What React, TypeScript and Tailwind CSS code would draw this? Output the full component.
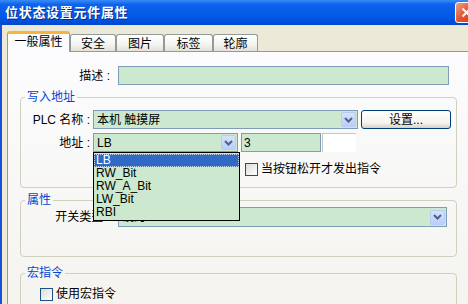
import React from 'react';

const green = 'bg-[#CCE8CF]';

function Arrow() {
  return (
    <div className="flex h-[15px] w-[15px] items-center justify-center rounded-[2px] border border-[#B9CBF3] bg-[linear-gradient(180deg,#D7E2FB_0%,#BBCEF9_100%)]">
      <svg width="9" height="6" viewBox="0 0 9 6">
        <polyline points="1,1 4.5,4.5 8,1" fill="none" stroke="#4D6185" strokeWidth="2" />
      </svg>
    </div>
  );
}

function Combo({ value, className, children }: { value: string; className: string; children?: React.ReactNode }) {
  return (
    <div className={`relative flex items-center border border-[#7F9DB9] ${green} ${className}`}>
      <span className="flex-1 pl-[3px] leading-[14px]">{value}</span>
      <div className="mr-[1px]">
        <Arrow />
      </div>
      {children}
    </div>
  );
}

function Checkbox({ label }: { label: string }) {
  return (
    <div className="flex h-[14px] items-center gap-[3px]">
      <div className="h-[13px] w-[13px] border border-[#1C5180] bg-[linear-gradient(135deg,#DCDCD7_0%,#FFFFFF_100%)]" />
      <span className="leading-[14px]">{label}</span>
    </div>
  );
}

function Group({ title, className, children }: { title: string; className: string; children: React.ReactNode }) {
  return (
    <fieldset className={`ml-[12px] w-[437px] rounded-[4px] border border-[#D0D0BF] ${className}`}>
      <legend className="ml-[4px] px-[2px] leading-[14px] text-[#0046D5]">{title}</legend>
      {children}
    </fieldset>
  );
}

const tabs = [
  { label: '安全', w: 'w-[46px]' },
  { label: '图片', w: 'w-[48px]' },
  { label: '标签', w: 'w-[49px]' },
  { label: '轮廓', w: 'w-[45px]' },
];

export default function App() {
  const items = ['LB', 'RW_Bit', 'RW_A_Bit', 'LW_Bit', 'RBI'];

  return (
    <div className="flex h-[304px] w-[468px] flex-col overflow-hidden bg-[#ECE9D8] font-['Liberation_Sans','Noto_Sans_CJK_SC',sans-serif] text-[12px] text-black">
      {/* title bar */}
      <div className="flex h-[25px] shrink-0 items-center bg-[linear-gradient(180deg,#3B8CF6_0%,#0D63EC_18%,#0058E6_70%,#0046CF_100%)] pl-[5px]">
        <span className="text-[13px] font-bold tracking-[0.7px] text-white [text-shadow:1px_1px_0_#0A2A8C]">
          位状态设置元件属性
        </span>
        <div className="ml-auto mr-[-10px] flex h-[21px] w-[23px] items-center justify-center rounded-[3px] border border-white bg-[linear-gradient(135deg,#F0A088_0%,#E0532E_50%,#C8401E_100%)]">
          <svg width="11" height="11" viewBox="0 0 11 11">
            <path d="M1.5 1.5 L9.5 9.5 M9.5 1.5 L1.5 9.5" stroke="white" strokeWidth="2" />
          </svg>
        </div>
      </div>

      {/* body */}
      <div className="flex flex-1 flex-col border-l-2 border-[#1652D8] pl-[5px] pt-[6px]">
        {/* tabs */}
        <div className="flex h-[20px] items-end">
          <div className="relative z-10 -mb-px flex h-[21px] w-[63px] items-start justify-center rounded-t-[3px] border-x border-t-[3px] border-x-[#919B9C] border-t-[#F5B43C] bg-[#FCFCFE] pt-[1px] leading-[14px]">
            一般属性
          </div>
          {tabs.map((t) => (
            <div
              key={t.label}
              className={`flex h-[17px] ${t.w} items-center justify-center rounded-t-[3px] border border-b-0 border-[#919B9C] bg-[linear-gradient(180deg,#FFFFFF_0%,#F3F3EF_60%,#E3E1D8_100%)] pt-[1px] leading-[14px]`}
            >
              {t.label}
            </div>
          ))}
        </div>

        {/* panel */}
        <div className="flex-1 border border-r-0 border-[#919B9C] bg-[linear-gradient(180deg,#FCFCFE_0%,#F4F3EE_100%)]">
          <div className="mt-[14px] flex h-[19px] items-center">
            <span className="w-[102px] text-right leading-[14px]">描述 :</span>
            <div className={`ml-[8px] h-[19px] w-[331px] border border-[#7F9DB9] ${green}`} />
          </div>

          <Group title="写入地址" className="mt-[5px] pb-[11px]">
            <div className="mt-[6px] flex h-[19px] items-center">
              <span className="w-[69px] text-right leading-[14px]">PLC 名称 :</span>
              <Combo value="本机 触摸屏" className="ml-[3px] h-[19px] w-[265px]" />
              <div className="ml-[3px] flex h-[19px] w-[90px] items-center justify-center rounded-[3px] border border-[#003C74] bg-[linear-gradient(180deg,#FFFFFF_0%,#F4F3EE_70%,#D6D0C5_100%)] leading-[14px]">
                设置...
              </div>
            </div>

            <div className="mt-[4px] flex h-[19px] items-center">
              <span className="w-[69px] text-right leading-[14px]">地址 :</span>
              <Combo value="LB" className="ml-[3px] h-[19px] w-[145px]">
                <div className={`absolute left-[-1px] top-[18px] z-20 w-[147px] border border-black ${green} py-[1px]`}>
                  {items.map((it, i) => (
                    <div
                      key={it}
                      className={`h-[13px] pl-[2px] leading-[13px] ${
                        i === 0 ? 'bg-[#316AC5] text-white outline-1 outline-dotted outline-offset-[-1px] outline-[#C8D8F0]' : ''
                      }`}
                    >
                      {it}
                    </div>
                  ))}
                </div>
              </Combo>
              <div className={`ml-[3px] flex h-[19px] w-[80px] items-center border border-[#7F9DB9] pl-[2px] ${green}`}>
                3
              </div>
              <div className="ml-[1px] h-[19px] w-[34px] border-l border-t border-[#C9C7BA] bg-white" />
            </div>

            <div className="ml-[224px] mt-[10px]">
              <Checkbox label="当按钮松开才发出指令" />
            </div>
          </Group>

          <Group title="属性" className="mt-[5px] pb-[29px]">
            <div className="flex h-[20px] items-center">
              <span className="w-[89px] text-right leading-[14px]">开关类型 :</span>
              <Combo value="设为 OFF" className="ml-[8px] h-[20px] w-[329px]" />
            </div>
          </Group>

          <Group title="宏指令" className="mt-[9px] pb-[20px]">
            <div className="ml-[19px] mt-[7px]">
              <Checkbox label="使用宏指令" />
            </div>
          </Group>
        </div>
      </div>
    </div>
  );
}
